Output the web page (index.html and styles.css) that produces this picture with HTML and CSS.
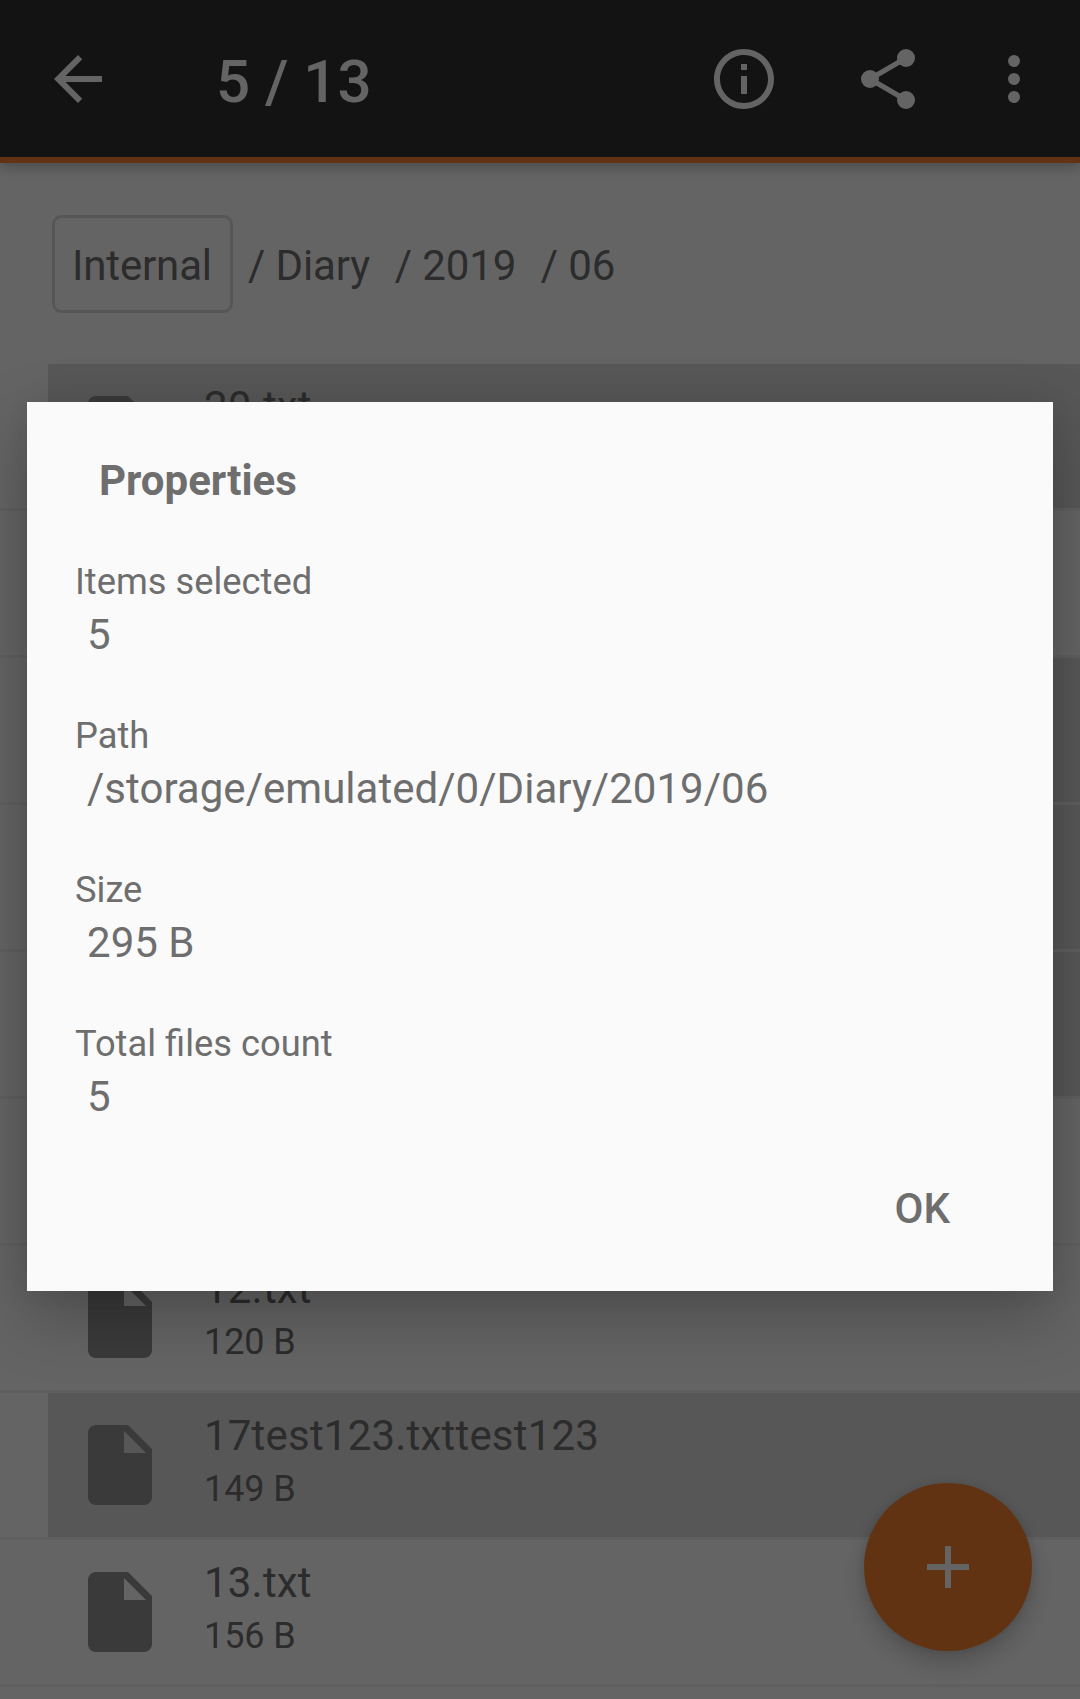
FILE: index.html
```html
<!DOCTYPE html>
<html lang="en">
<head>
<meta charset="utf-8">
<title>Properties</title>
<link rel="stylesheet" href="styles.css">
</head>
<body>
<svg class="defs" aria-hidden="true">
  <symbol id="file" viewBox="0 0 24 24"><path d="M6 2c-1.1 0-2 .9-2 2v16c0 1.1.9 2 2 2h12c1.100 0 2-.9 2-2V8l-6-6H6zm7 7V3.500L18.500 9H13z"/></symbol>
</svg>
<div class="screen">
  <header class="bar">
    <svg class="icon" viewBox="0 0 24 24"><path d="M20 11H7.830l5.590-5.590L12 4l-8 8 8 8 1.410-1.410L7.830 13H20v-2z"/></svg>
    <h1 class="count">5 / 13</h1>
    <svg class="icon info" viewBox="0 0 24 24"><path d="M11 17h2v-6h-2v6zm1-15C6.480 2 2 6.480 2 12s4.480 10 10 10 10-4.480 10-10S17.520 2 12 2zm0 18c-4.410 0-8-3.590-8-8s3.590-8 8-8 8 3.590 8 8-3.590 8-8 8zM11 9h2V7h-2v2z"/></svg>
    <svg class="icon share" viewBox="0 0 24 24"><path class="link" d="M18 5L6 12l12 7"/><circle cx="18" cy="5" r="3"/><circle cx="6" cy="12" r="3"/><circle cx="18" cy="19" r="3"/></svg>
    <svg class="icon more" viewBox="0 0 24 24"><circle cx="12" cy="6" r="2"/><circle cx="12" cy="12" r="2"/><circle cx="12" cy="18" r="2"/></svg>
  </header>
  <nav class="crumbs">
    <span class="root">Internal</span>
    <span class="crumb">/ Diary</span>
    <span class="crumb">/ 2019</span>
    <span class="crumb">/ 06</span>
  </nav>
  <main class="list">
    <div class="row"><div class="item selected"><svg class="file"><use href="#file"/></svg><div><p class="name">20.txt</p></div></div></div>
    <div class="row"></div>
    <div class="row"><div class="item selected"></div></div>
    <div class="row"><div class="item selected"></div></div>
    <div class="row"><div class="item selected"></div></div>
    <div class="row"></div>
    <div class="row"><div class="item"><svg class="file"><use href="#file"/></svg><div><p class="name">12.txt</p><p class="size">120 B</p></div></div></div>
    <div class="row"><div class="item selected"><svg class="file"><use href="#file"/></svg><div><p class="name">17test123.txttest123</p><p class="size">149 B</p></div></div></div>
    <div class="row"><div class="item"><svg class="file"><use href="#file"/></svg><div><p class="name">13.txt</p><p class="size">156 B</p></div></div></div>
  </main>
  <div class="fab"><svg class="icon" viewBox="0 0 24 24"><path d="M19 13h-6v6h-2v-6H5v-2h6V5h2v6h6v2z"/></svg></div>
  <div class="scrim">
    <section class="dialog">
      <h2 class="title">Properties</h2>
      <dl class="props">
        <div class="prop"><dt>Items selected</dt><dd>5</dd></div>
        <div class="prop"><dt>Path</dt><dd>/storage/emulated/0/Diary/2019/06</dd></div>
        <div class="prop"><dt>Size</dt><dd>295 B</dd></div>
        <div class="prop"><dt>Total files count</dt><dd>5</dd></div>
      </dl>
      <button class="ok">OK</button>
    </section>
  </div>
</div>
</body>
</html>
```
FILE: styles.css
```css
* { box-sizing: border-box; margin: 0; padding: 0; }
body { font-family: Roboto, sans-serif; color: #6e6e6e; }
.defs { position: absolute; width: 0; height: 0; }
.screen { position: relative; width: 1080px; height: 1699px; overflow: hidden; background: #fafafa; }

.bar {
  position: relative;
  display: flex;
  align-items: center;
  height: 163px;
  padding: 0 30px 0 42px;
  background: #303030;
  border-bottom: 6px solid #f28030;
  box-shadow: 0 4px 12px rgba(0, 0, 0, .26);
}
.icon { width: 72px; height: 72px; fill: #fafafa; flex: none; }
.link { fill: none; stroke: #fafafa; stroke-width: 1.7; }
.count { flex: 1; padding: 6px 0 0 102px; font-size: 60px; font-weight: 500; line-height: 70px; color: #fafafa; }
.share { margin-left: 72px; }
.more { margin-left: 54px; }

.crumbs { display: flex; align-items: center; height: 201px; padding: 0 52px; font-size: 42px; line-height: 50px; }
.root { height: 98px; width: 181px; padding: 23px 0 0 17px; border: 3px solid #d8d8d8; border-radius: 9px; letter-spacing: -.15px; }
.crumb { margin-left: 15px; padding-top: 4px; letter-spacing: -.1px; }
.crumb + .crumb { margin-left: 24.500px; }

.row { height: 147px; border-bottom: 3px solid #ededed; }
.item { display: flex; height: 144px; margin-left: 48px; padding: 17px 0 0 24px; }
.selected { background: #dadada; }
.file { width: 96px; height: 96px; margin: 7px 36px 0 0; fill: #919191; }
.name { padding-top: 1px; font-size: 42px; line-height: 50px; letter-spacing: .2px; }
.size { font-size: 36px; line-height: 42px; margin-top: 7px; letter-spacing: -.1px; }

.fab {
  position: absolute;
  left: 864px;
  top: 1483px;
  display: flex;
  align-items: center;
  justify-content: center;
  width: 168px;
  height: 168px;
  border-radius: 50%;
  background: #f28030;
  box-shadow: 0 12px 24px rgba(0, 0, 0, .2), 0 0 8px rgba(0, 0, 0, .1);
}

.scrim { position: absolute; inset: 0; padding: 402px 27px 0; background: rgba(0, 0, 0, .6); }
.dialog {
  display: flex;
  flex-direction: column;
  height: 889px;
  padding: 55px 48px 0;
  background: #fafafa;
  box-shadow: 0 24px 60px rgba(0, 0, 0, .25), 0 0 24px rgba(0, 0, 0, .05);
}
.title { padding-left: 24px; font-size: 42px; font-weight: 700; line-height: 48px; }
.props { display: grid; grid-auto-rows: 154px; margin-top: 56px; }
.prop dt { font-size: 36.300px; line-height: 42px; }
.prop dd { padding-left: 12px; margin-top: 8px; font-size: 42px; line-height: 48px; letter-spacing: .03px; }
.ok {
  align-self: flex-end;
  margin: 8px 55px 0 0;
  border: 0;
  background: none;
  font: 500 42px/48px Roboto, sans-serif;
  color: inherit;
}
```
